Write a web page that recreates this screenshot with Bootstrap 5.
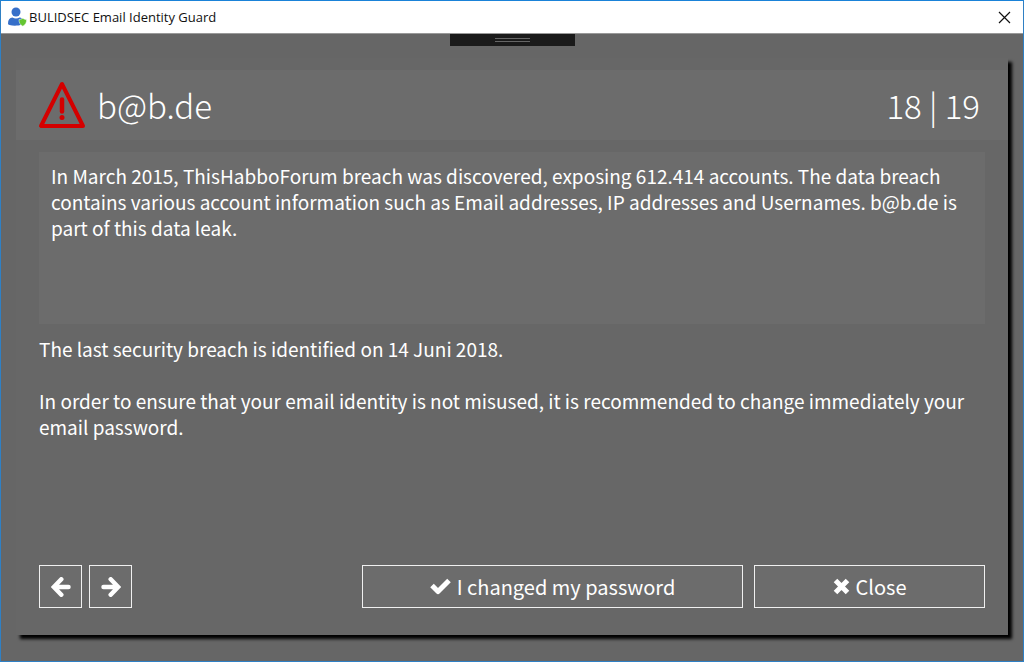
<!DOCTYPE html>
<html lang="en">
<head>
<meta charset="utf-8">
<meta name="viewport" content="width=device-width, initial-scale=1">
<title>BULIDSEC Email Identity Guard</title>
<link href="https://cdn.jsdelivr.net/npm/bootstrap@5.3.0/dist/css/bootstrap.min.css" rel="stylesheet">
<style>
body { font-family: "Noto Sans CJK SC", sans-serif; font-size: 19px; line-height: 26px; color: #fff; background: #666; }
.window { border: 1px solid #2f80c4; border-top-color: #1a82d8; }
.titlebar { height: 33px; padding: 0 12px 0 6px; background: #fff; color: #111; border-bottom: 1px solid #999; font: 13px/20px "Open Sans", sans-serif; }
.app-name { gap: 2px; }
.win-close { color: #111; line-height: 0; }
.handle { width: 125px; height: 12px; background: #1a1a1a; }
.grip { width: 35px; height: 4px; border: solid #666; border-width: 1px 0; }
.panel { margin: 12px 15px 26px; padding: 12px 0 27px; background: #676767; box-shadow: 4px 4px 3px #000; }
.panel-head { height: 70px; padding: 0 28px 0 22px; background: #6c6c6c; }
.panel-head h1, .counter { font-size: 33px; line-height: 50px; font-weight: 300; }
.heading { gap: 10px; }
.panel-body { padding: 12px 23px 0; }
.details { min-height: 172px; padding: 11px 12px; background: #6c6c6c; }
.advice { padding-top: 12px; }
.advice p { margin-bottom: 26px; }
.action { height: 43px; border: 1px solid #f0f0f0; background: #6c6c6c; color: #fff; font-size: 20px; line-height: 26px; gap: 6px; }
.action:hover { background: #777; color: #fff; border-color: #fff; }
.nav-group { gap: 7px; }
.nav-action { width: 43px; }
.answer-group { gap: 11px; }
.confirm { width: 381px; }
.dismiss { width: 231px; }
</style>
<script src="https://cdn.jsdelivr.net/npm/bootstrap@5.3.0/dist/js/bootstrap.bundle.min.js"></script>
</head>
<body>
<div class="window d-flex flex-column min-vh-100">
  <header class="titlebar d-flex align-items-center justify-content-between">
    <div class="app-name d-flex align-items-center">
      <svg width="20" height="20" viewBox="0 0 20 20" aria-hidden="true">
        <circle cx="9" cy="5" r="4.500" fill="#366fc9"/>
        <path d="M1 16.500c0-3.500 1.500-5.800 4.500-6 2 1.200 5 1.200 7 0 1 .1 1.800.5 2.500 1.200v5.800c-4 1.500-9 1.500-12.500.500-1-.3-1.500-.8-1.500-1.500z" fill="#366fc9"/>
        <path d="M12 12.500c1.500 0 2.500-.4 3.800-1.200 1.300.8 2.300 1.200 3.800 1.200 0 3.200-1 5.300-3.800 6.700-2.800-1.400-3.800-3.500-3.800-6.700z" fill="#65c532" stroke="#fff" stroke-width=".5"/>
      </svg>
      <span>BULIDSEC Email Identity Guard</span>
    </div>
    <button type="button" class="win-close border-0 bg-transparent p-0" aria-label="Close window">
      <svg width="13" height="13" viewBox="0 0 13 13" fill="none" stroke="currentColor" stroke-width="1.200"><path d="M1 1l11 11M12 1L1 12"/></svg>
    </button>
  </header>
  <div class="handle d-flex align-items-center justify-content-center align-self-center"><div class="grip"></div></div>
  <main class="panel d-flex flex-column flex-grow-1">
    <div class="panel-head d-flex align-items-center justify-content-between">
      <div class="heading d-flex align-items-center">
        <svg width="49" height="48" viewBox="0 0 49 48" fill="none" stroke="#d40000" stroke-linejoin="round" stroke-linecap="round" aria-hidden="true">
          <path d="M24 3L3 45h42z" stroke-width="4"/>
          <path d="M24 18.500v12" stroke-width="4.500"/>
          <circle cx="24" cy="36.500" r="2.500" fill="#d40000" stroke="none"/>
        </svg>
        <h1 class="m-0">b@b.de</h1>
      </div>
      <div class="counter">18 | 19</div>
    </div>
    <div class="panel-body d-flex flex-column flex-grow-1">
      <div class="details">In March 2015, ThisHabboForum breach was discovered, exposing 612.414 accounts. The data breach contains various account information such as Email addresses, IP addresses and Usernames. b@b.de is part of this data leak.</div>
      <div class="advice">
        <p>The last security breach is identified on 14 Juni 2018.</p>
        <p>In order to ensure that your email identity is not misused, it is recommended to change immediately your email password.</p>
      </div>
      <div class="d-flex justify-content-between mt-auto">
        <div class="nav-group d-flex">
          <button type="button" class="action nav-action btn rounded-0 p-0 d-flex align-items-center justify-content-center" aria-label="Previous">
            <svg width="20" height="20" viewBox="0 0 20 20" fill="none" stroke="currentColor" stroke-width="4.500" stroke-linecap="round" stroke-linejoin="miter"><path d="M10.300 2.300L2.800 10l7.500 7.700M3.500 10h14"/></svg>
          </button>
          <button type="button" class="action nav-action btn rounded-0 p-0 d-flex align-items-center justify-content-center" aria-label="Next">
            <svg width="20" height="20" viewBox="0 0 20 20" fill="none" stroke="currentColor" stroke-width="4.500" stroke-linecap="round" stroke-linejoin="miter"><path d="M9.700 2.300l7.500 7.700-7.500 7.700M16.500 10h-14"/></svg>
          </button>
        </div>
        <div class="answer-group d-flex">
          <button type="button" class="action confirm btn rounded-0 p-0 d-flex align-items-center justify-content-center">
            <svg width="21" height="17" viewBox="0 0 21 17" fill="none" stroke="currentColor" stroke-width="5" stroke-linejoin="round"><path d="M2 7.500l6 6L19 2.500"/></svg>
            I changed my password
          </button>
          <button type="button" class="action dismiss btn rounded-0 p-0 d-flex align-items-center justify-content-center">
            <svg width="17" height="17" viewBox="0 0 17 17" fill="none" stroke="currentColor" stroke-width="5"><path d="M2.500 2.500l12 12M14.500 2.500l-12 12"/></svg>
            Close
          </button>
        </div>
      </div>
    </div>
  </main>
</div>
</body>
</html>
